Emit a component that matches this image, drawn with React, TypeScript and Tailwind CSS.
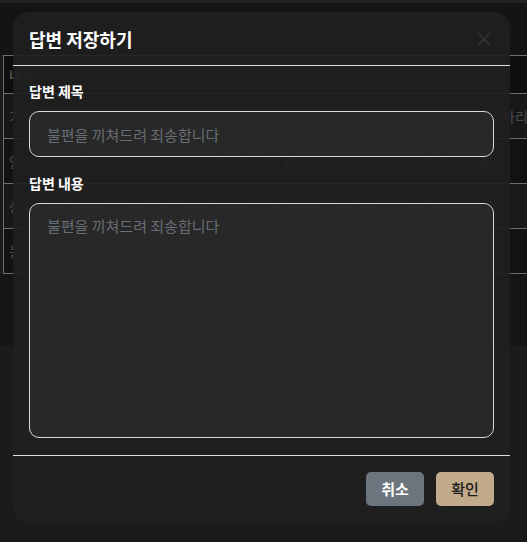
import { useState } from "react";

const rows = [
  {
    text: "가상계좌 발급 도와드리겠습니다. 입금 후 잠시만 기다려 주시면 처리 완료됩니다. 다음 자리 ",
    link: "입금확인",
    bg: "bg-[#171717]",
  },
  {
    text: "안녕하세요 회원님. 23:30~00:30분까지는 은행 점검시간 입니다. 이 시간에는 출금",
    link: "0",
    bg: "bg-[#121212]",
  },
  {
    text: "상위 관리자에게 문의 해주세요. 보안상 사이트 통해서 계좌 안내 불가합니다.",
    link: "",
    bg: "bg-[#191919]",
  },
  {
    text: "능합니다. 확인 후 다시 안내 드리겠습니다.",
    link: "",
    bg: "bg-[#121212]",
  },
];

export default function App() {
  const [title, setTitle] = useState("");
  const [content, setContent] = useState("");

  return (
    <div className="relative h-[542px] w-full overflow-hidden bg-[#1b1b1b] font-['Noto_Sans_CJK_KR','Noto_Sans',sans-serif]">
      <div className="h-[3px] bg-[#222222]" />
      <div className="h-[52px] bg-[#141414]" />
      <div className="ml-[3px] overflow-hidden border-l border-[#6f6f6f] bg-[#0e0e0e] text-[14px] whitespace-nowrap">
        <div className="flex h-[38px] items-center border-t border-[#6f6f6f] pl-[5px] text-[13px] font-bold text-[#4e4e4e]">
          내용
        </div>
        {rows.map((row) => (
          <div
            key={row.text}
            className={`flex h-[45px] items-center border-t border-[#6f6f6f] pl-[5px] text-[#4c4c4c] ${row.bg}`}
          >
            {row.text}
            {row.link && <span className="text-[#3a7d9c]">{row.link}</span>}
          </div>
        ))}
        <div className="border-t border-[#6f6f6f]" />
      </div>
      <div className="h-[72px] bg-[#151515]" />

      {/* 답변 저장 모달 */}
      <div className="absolute top-[12px] left-[13px] w-[497px] rounded-2xl bg-[#1f1f1f]/[0.92] text-white">
        <div className="flex h-[54px] items-center justify-between border-b border-[#dedede] pr-[19px] pl-4">
          <h2 className="text-[18px] leading-7 font-bold">답변 저장하기</h2>
          <button className="text-[#2f2f2f]">
            <svg width="14" height="14" viewBox="0 0 14 14" fill="none">
              <path d="M1 1L13 13M13 1L1 13" stroke="currentColor" strokeWidth="2" />
            </svg>
          </button>
        </div>

        <div className="px-4 pt-[15px] pb-[17px]">
          <label className="mb-[10px] block text-[14px] leading-5 font-bold">답변 제목</label>
          <input
            value={title}
            onChange={(e) => setTitle(e.target.value)}
            placeholder="불편을 끼쳐드려 죄송합니다"
            className="block h-[46px] w-full rounded-[10px] border border-[#d9d9d9] bg-[#282828] px-[17px] text-[15px] text-white outline-none placeholder:text-[#676d74]"
          />
          <label className="mt-4 mb-[10px] block text-[14px] leading-5 font-bold">답변 내용</label>
          <textarea
            value={content}
            onChange={(e) => setContent(e.target.value)}
            placeholder="불편을 끼쳐드려 죄송합니다"
            className="block h-[235px] w-full resize-none rounded-[10px] border border-[#d9d9d9] bg-[#282828] px-[17px] py-[11px] text-[15px] leading-[22px] text-white outline-none placeholder:text-[#676d74]"
          />
        </div>

        <div className="flex justify-end gap-3 border-t border-[#dedede] px-4 py-4">
          <button className="h-[34px] w-[58px] rounded-[5px] bg-[#6c757d] text-[15px] font-bold text-white">
            취소
          </button>
          <button className="h-[34px] w-[58px] rounded-[5px] bg-[#c2ab8b] text-[15px] font-medium text-[#1a1a1a]">
            확인
          </button>
        </div>
      </div>
    </div>
  );
}
